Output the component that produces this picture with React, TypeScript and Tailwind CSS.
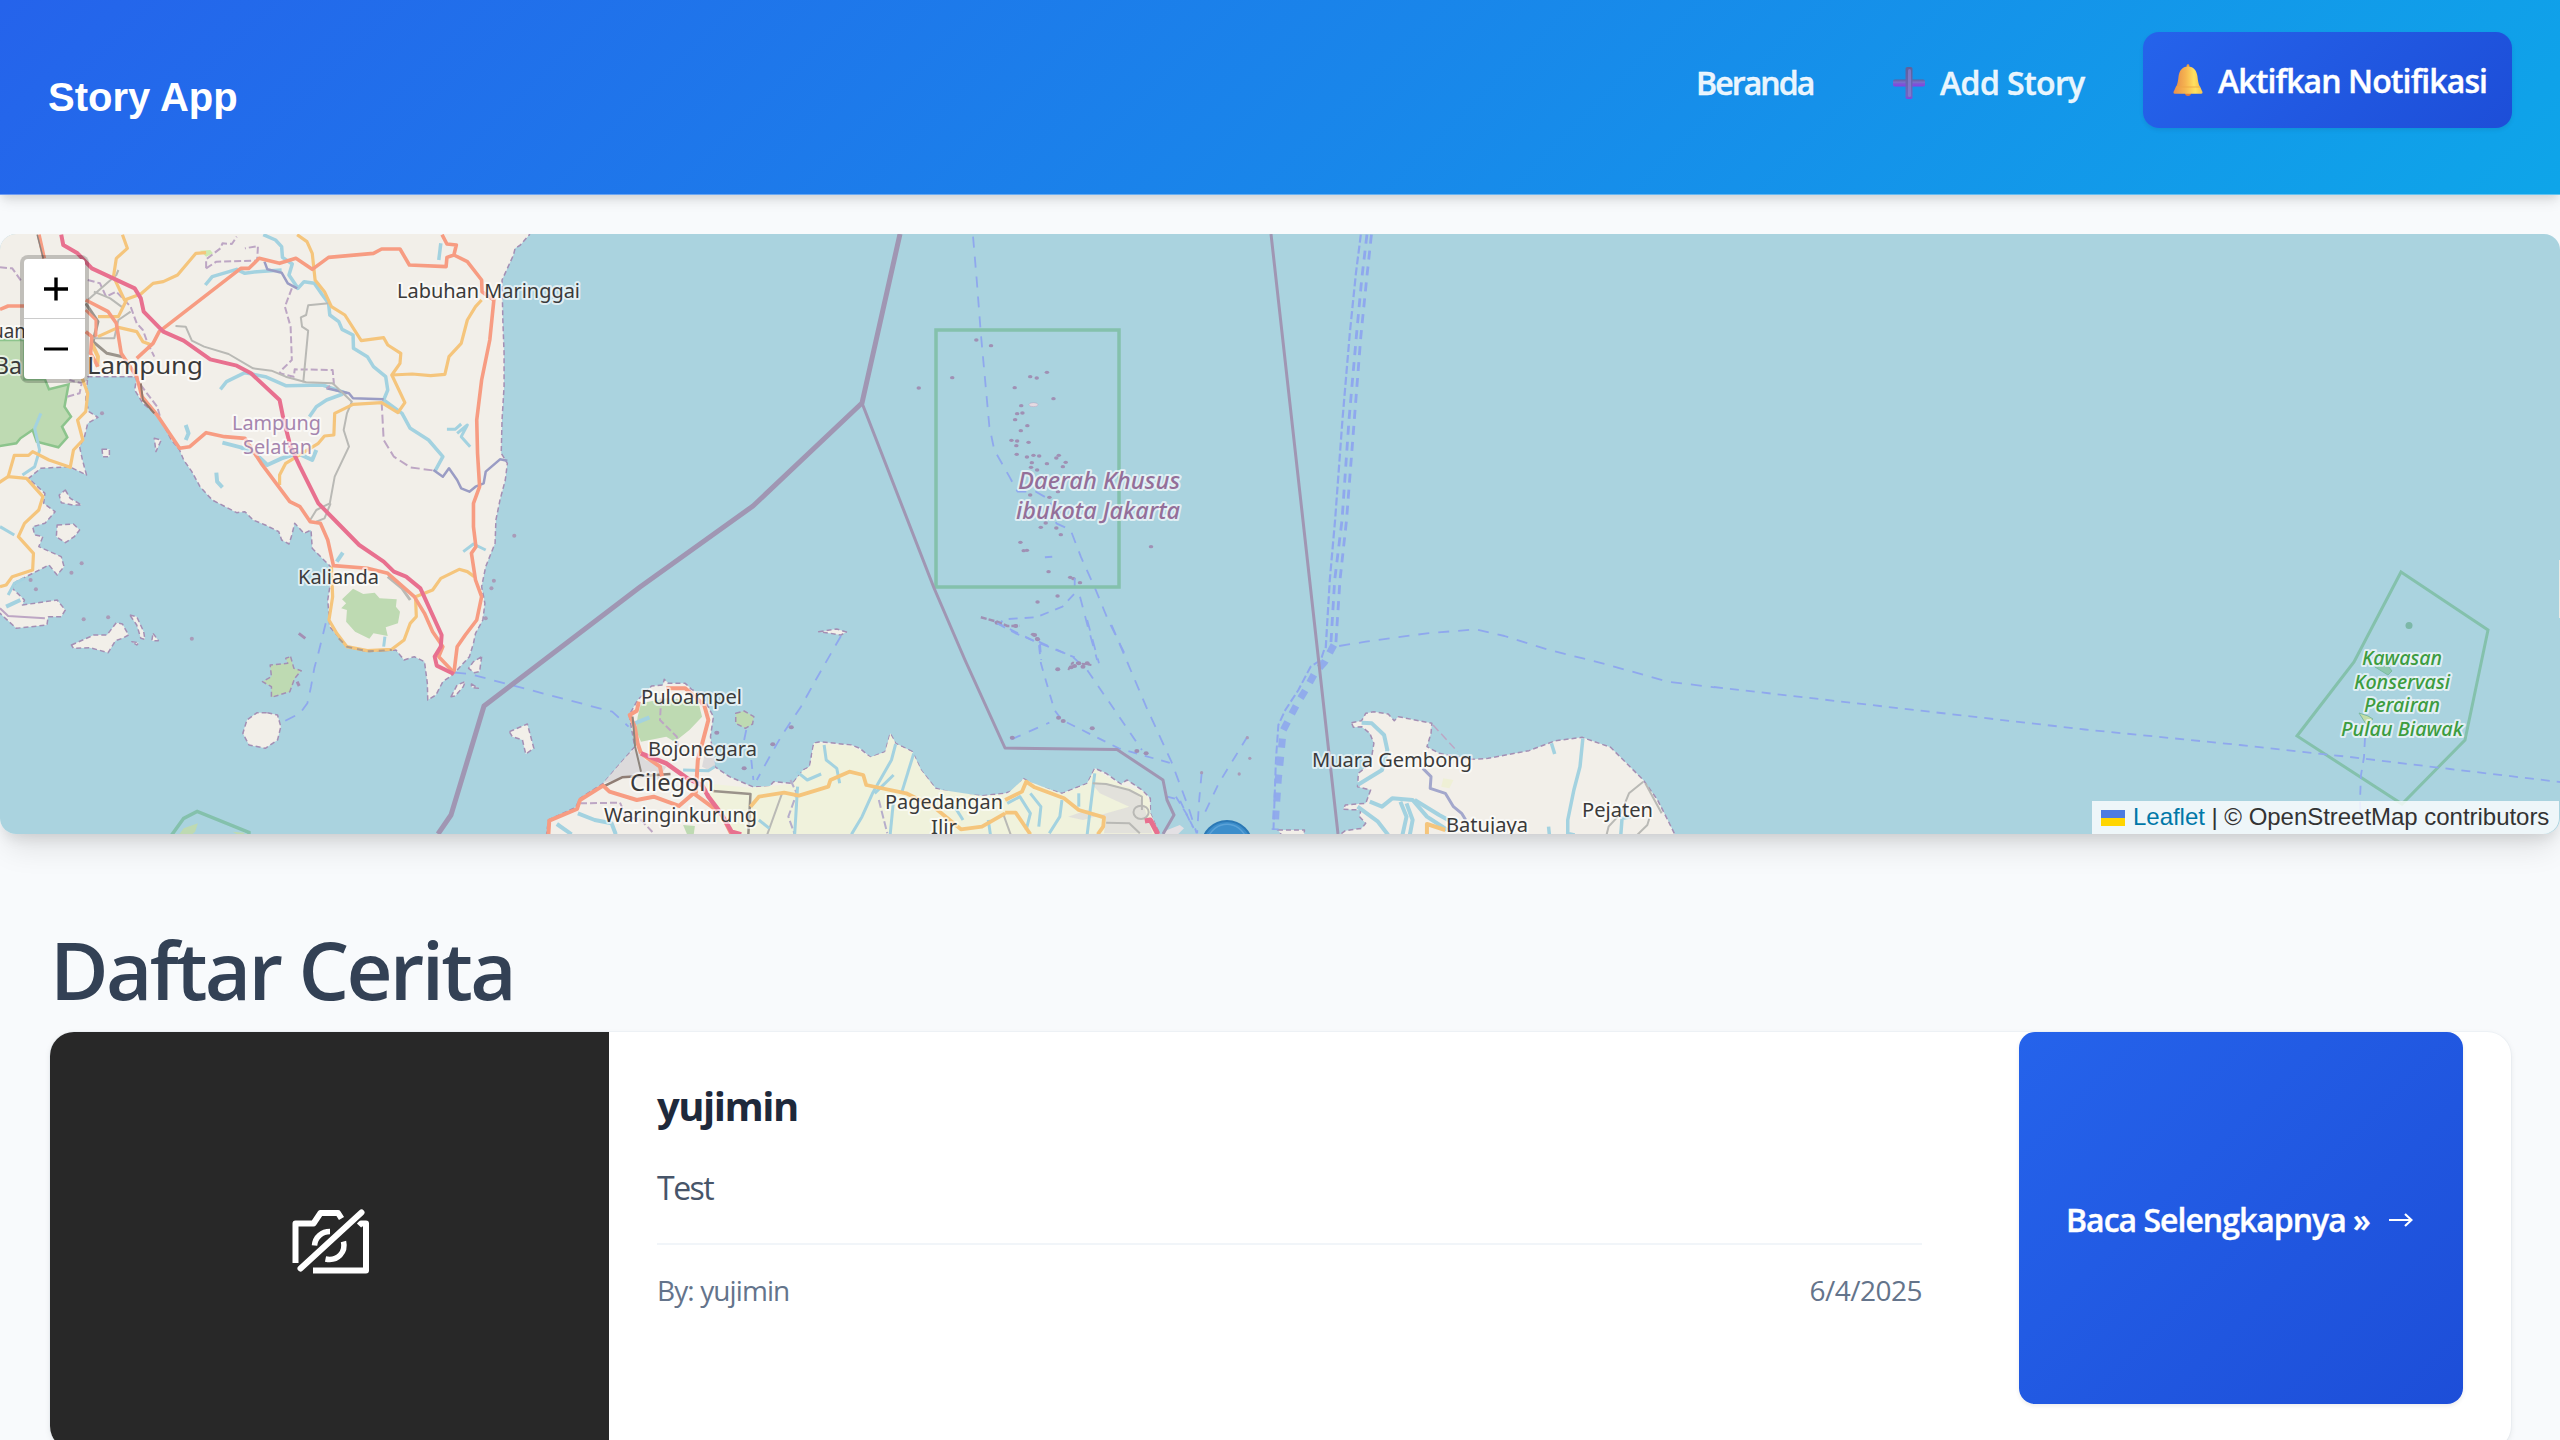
import React from 'react';

type LineProps = { p: string; c: string; w?: number; d?: string; o?: number };

// Polyline whose stroke keeps its width inside scaled groups.
const Line = ({ p, c, w = 2, d, o = 1 }: LineProps) => (
  <polyline points={p} fill="none" stroke={c} strokeWidth={w} strokeDasharray={d} opacity={o} strokeLinejoin="round" vectorEffect="non-scaling-stroke" />
);

const Land = ({ p, f = '#f2efe9', s = '#a48fb4' }: { p: string; f?: string; s?: string }) => (
  <polygon points={p} fill={f} stroke={s} strokeWidth={1.5} strokeDasharray="5 3" vectorEffect="non-scaling-stroke" strokeLinejoin="round" />
);

type LabelProps = { x: number; x2: number; y: number; s?: number; c?: string; i?: boolean; w?: number; t: string };

const Label = ({ x, x2, y, s = 20, c = '#3a3a3a', i, w = 400, t }: LabelProps) => (
  <text
    x={x}
    y={y}
    fontSize={s}
    fill={c}
    fontWeight={w}
    fontStyle={i ? 'italic' : 'normal'}
    textLength={x2 - x}
    lengthAdjust="spacingAndGlyphs"
    stroke="#ffffff"
    strokeOpacity={0.65}
    strokeWidth={4}
    strokeLinejoin="round"
    paintOrder="stroke"
  >
    {t}
  </text>
);

const MOTOR = '#e8708f';
const TRUNK = '#f79c82';
const ROAD = '#f5c57c';
const RIVER = '#a3d2e0';
const FERRY = '#8fa8ee';
const ADMIN = '#a096b3';
const BOUND = '#bda6c4';
const RAIL = '#b9b9b5';
const PARK = '#bedab2';
const RESERVE = '#84c1ac';

const islets: [number, number][] = [
  [334, 360], [370, 377], [275, 473], [193, 504], [507, 457], [482, 474], [466, 470], [428, 503], [523, 536], [444, 557],
  [434, 581], [447, 579], [429, 599], [459, 617], [443, 632], [420, 661], [434, 663], [462, 667], [432, 677], [433, 703],
  [458, 711], [474, 706], [488, 708], [470, 728], [507, 731], [530, 714], [536, 706], [553, 727], [546, 740], [468, 742],
  [483, 750], [466, 825], [513, 832], [534, 815], [504, 909], [492, 922], [530, 924], [541, 944], [442, 967], [450, 992],
  [458, 991], [511, 1055], [564, 1072], [572, 1076], [588, 1088], [533, 1128], [484, 1146], [762, 980], [473, 1243], [483, 1256],
];

const West = () => (
  <g transform="translate(0 220) scale(0.40816 0.33333)">
    <Land p="-10,30 1300,30 1297,44 1275,75 1262,85 1258,105 1245,140 1230,180 1232,300 1235,400 1235,500 1230,600 1228,700 1243,730 1238,780 1225,840 1215,900 1213,970 1203,1000 1190,1040 1180,1100 1188,1150 1183,1200 1165,1240 1160,1270 1150,1310 1120,1350 1105,1368 1085,1385 1068,1425 1048,1440 1047,1390 1040,1325 1015,1310 990,1320 970,1290 900,1295 850,1280 808,1220 803,1140 812,1070 810,1040 765,985 762,930 745,940 722,910 715,945 708,972 690,960 683,935 650,915 620,900 600,875 580,878 520,840 490,800 470,755 450,720 440,690 420,660 390,590 350,550 330,510 335,470 215,470 210,540 218,575 240,592 215,610 207,650 195,680 202,720 212,765 170,740 100,745 70,775 110,820 107,850 135,875 110,910 80,920 85,945 105,950 95,980 150,1010 157,1040 140,1065 120,1035 80,1060 40,1085 30,1105 60,1140 55,1155 140,1140 160,1170 150,1190 118,1190 115,1215 40,1225 0,1180 -10,1170" />
    <polygon points="-10,360 60,360 60,478 110,478 120,508 168,493 158,560 174,590 152,620 165,652 143,682 90,665 80,630 50,655 40,670 -10,680" fill={PARK} stroke="#8cc48c" strokeWidth={2.5} vectorEffect="non-scaling-stroke" />
    <polygon points="865,1106 890,1122 918,1118 930,1135 972,1138 970,1160 980,1175 975,1210 945,1222 950,1248 915,1240 905,1256 870,1235 848,1205 850,1170 836,1165 848,1150 838,1138" fill={PARK} />
    <polygon points="490,92 515,90 522,100 505,110" fill="#cdebb0" />

    <Line p="645,44 675,60 690,80 692,112 716,132 708,165 730,205 745,185 770,190 790,225 805,250 808,285 830,305 838,328 865,345 866,385 900,410 915,440 945,470 950,510 940,540 985,580 1005,625 1050,660 1085,710 1065,755" c={RIVER} w={3.5} />
    <Line p="503,195 520,170 580,148 600,160 630,155 690,150" c={RIVER} w={3.5} />
    <Line p="540,508 555,485 600,458 650,470 700,497 790,495 850,520" c={RIVER} w={3.5} />
    <Line p="758,590 775,560 800,540 840,522" c={RIVER} w={3.5} />
    <Line p="455,615 462,640 455,660" c={RIVER} w={4} />
    <Line p="530,758 532,785 545,802" c={RIVER} w={4} />
    <Line p="545,668 590,682 625,700 655,735 690,715 730,700 765,720 775,690" c={RIVER} w={4} />
    <Line p="1095,628 1115,628 1130,612" c={RIVER} w={3} />
    <Line p="1120,640 1145,615 1130,650 1152,680" c={RIVER} w={3} />
    <Line p="1075,120 1080,70" c={RIVER} w={3.5} />
    <Line p="100,580 85,625 97,690 85,740 55,765" c={RIVER} w={3} />
    <Line p="0,920 35,945" c={RIVER} w={3} />
    <Line p="20,1125 35,1090 60,1075" c={RIVER} w={3} />
    <Line p="825,1025 840,998" c={RIVER} w={4} />
    <Line p="1135,995 1160,972 1190,990" c={RIVER} w={3} />
    <Line p="15,1160 50,1140" c={RIVER} w={4} />
    <Line p="940,1280 943,1250" c={RIVER} w={3} />

    <Line p="648,125 655,148 690,158 705,190 728,205" c="#9a9cc4" w={2.5} />
    <Line p="800,505 855,520 865,535 940,538" c="#9a9cc4" w={2.5} />
    <Line p="1062,750 1085,770 1100,745 1120,780 1130,805 1150,815 1165,800 1185,790 1190,755 1225,718 1243,722" c="#9a9cc4" w={2.5} />
    <Line p="715,205 698,260 712,320 715,420 690,450 685,460 720,470 722,448 815,450 818,490 800,505" c={BOUND} d="7 3" />
    <Line p="935,545 940,660 965,710 1005,742 1065,752" c={BOUND} d="9 4" />
    <Line p="505,145 505,118 540,85 545,70 568,72 580,50" c={BOUND} d="7 3" />
    <Line p="505,145 530,125 630,122 632,78 600,85" c={BOUND} d="7 3" />
    <Line p="215,180 245,190 260,230 285,215 320,260 335,310 350,330 362,370 378,410" c={BOUND} d="7 3" />
    <Line p="0,142 30,145 55,188" c={BOUND} d="7 3" />
    <Line p="165,530 195,520 200,490 170,480" c={BOUND} d="7 3" />
    <Line p="330,470 360,520 385,560 392,590" c={BOUND} d="7 3" />
    <Line p="0,1165 20,1188 110,1195" c={BOUND} />

    <Line p="430,318 455,320 470,362 500,380 560,402 620,445 665,452 700,470 750,487 815,490 862,545 850,580 842,630 855,680 820,770 808,850 775,870 760,900" c={RAIL} />
    <Line p="805,250 755,256 750,285 737,292 740,320 755,332 743,487" c={RAIL} />
    <Line p="810,850 795,895 775,905" c={RAIL} />
    <Line p="210,250 240,305 228,365 262,400 300,410" c="#9b948c" w={3} />
    <Line p="215,240 285,165 290,150" c={RAIL} />
    <Line p="230,215 270,235 300,262" c={RAIL} />
    <Line p="225,355 280,355 290,300 320,275" c={RAIL} />
    <Line p="950,1070 985,1105 1005,1140" c={RAIL} w={3} />

    <Line p="300,44 312,85 285,115 278,170 305,240 345,222 375,190 400,185 435,165 480,100 505,98" c={ROAD} w={3.2} />
    <Line p="728,44 752,65 765,100 772,180 795,215 812,260 845,285 885,362 940,353 950,375 982,400 980,430 960,465 1010,462 1055,467 1090,463 1100,410 1130,370 1145,300 1165,260 1180,240" c={ROAD} w={3.2} />
    <Line p="960,465 992,548 975,578 935,548 865,553 820,580 818,645 795,648 780,670 700,730 685,765 685,795" c={ROAD} w={3.2} />
    <Line p="310,240 290,290 240,290" c={ROAD} w={3.2} />
    <Line p="240,350 290,322 335,335 350,365 372,375" c={ROAD} w={3.2} />
    <Line p="225,370 240,410 238,440" c={ROAD} w={4} />
    <Line p="200,470 215,520 210,575 190,600 203,660 180,690 172,742 120,720 80,695 70,706 35,706 20,770 65,775 105,830 95,870 60,910 45,950 82,1000 80,1050 30,1070 15,1095 0,1100" c={ROAD} w={3.2} />
    <Line p="20,770 -5,790" c={ROAD} w={3.2} />
    <Line p="812,1040 815,1130 806,1200 825,1240 850,1280 900,1292 960,1288 990,1260 1005,1210 1020,1190 1018,1130 1060,1110 1080,1075 1125,1048 1145,1055 1162,1070" c={ROAD} w={3.2} />
    <Line p="830,1255 850,1280 900,1294 960,1290" c="#b39e8a" w={2} d="6 5" />

    <Line p="335,415 375,370 390,335 590,145 610,145 635,115 685,130 725,115 765,148 805,112 915,100 935,87 980,87 1003,135 1093,140 1095,112 1112,105 1118,75 1095,72 1083,44" c={TRUNK} w={3.6} />
    <Line p="1112,105 1145,125 1180,180 1181,215 1210,240 1200,360 1180,480 1168,600 1170,700 1175,800 1160,850 1160,920 1166,980 1155,1000 1165,1080 1180,1130 1168,1200 1140,1245 1120,1280 1112,1360" c={TRUNK} w={3.6} />
    <Line p="210,240 265,275 285,310 297,400 335,470 348,530 385,585 415,640 440,685 465,680 505,638 550,650 600,655 640,730 710,845 735,860 760,905 785,910 803,960 817,1037 900,1045 950,1060 1015,1130 1040,1180 1060,1235 1085,1280 1075,1310 1110,1355" c={TRUNK} w={3.6} />
    <Line p="95,44 108,115" c={TRUNK} w={4} />
    <Line p="91,44 106,115" c="#8b8480" w={1.5} />
    <Line p="0,268 20,258 60,258" c={TRUNK} w={3.6} />
    <Line p="210,335 225,350 222,400 240,440" c={TRUNK} w={3.6} />
    <Line p="210,270 235,300 235,350" c={TRUNK} w={3} />
    <Line p="345,490 350,540 378,580" c="#95776a" w={2} />
    <Line p="150,44 155,75 190,100 225,145 330,205 345,235 352,275 400,335 450,362 515,418 580,437 615,460 685,540 695,600 712,680 735,740 780,850 820,900 880,975 940,1025 965,1055 995,1070 1030,1105 1082,1245 1080,1280 1065,1310 1070,1337 1112,1362" c={MOTOR} w={4} />

    <Land p="160,810 172,835 200,855 178,855 150,848 145,825" />
    <Land p="250,688 268,688 268,710 252,710" />
    <Land p="140,915 180,912 195,930 182,950 160,968 138,950" />
    <Land p="175,1275 230,1245 262,1245 285,1208 300,1212 315,1245 300,1255 283,1262 265,1298 220,1283 180,1285" />
    <Land p="318,1185 335,1190 352,1235 355,1258 345,1255 335,1215" />
    <Land p="375,1240 388,1262 372,1262" />
    <Land p="323,1265 340,1268 335,1275" />
    <Land p="378,655 395,660 382,695" />
    <Land p="655,1478 680,1485 688,1520 680,1560 650,1585 610,1575 595,1540 605,1500 630,1478" />
    <Land p="712,1310 720,1345 738,1352 722,1375 710,1415 665,1432 665,1400 643,1385 665,1370 662,1335 705,1330 700,1315" f={PARK} />
    <Land p="1180,1310 1175,1355 1162,1358 1148,1345 1160,1325" />
    <Land p="1105,1430 1120,1395 1140,1385 1135,1400 1115,1428" />
    <Land p="1155,1392 1172,1405 1155,1402" />
    <Land p="1248,1535 1292,1512 1308,1585 1288,1602 1280,1560 1255,1550" />
    <Line p="732,1240 748,1255" c="#a48fb4" w={3} />
    <Line p="728,1385 733,1398" c="#a48fb4" w={3} />
    {[[200, 1030], [205, 1198], [265, 1192], [470, 1256], [1260, 947], [1210, 1082], [1204, 1105], [75, 1080], [88, 1108], [175, 1058], [250, 580], [1190, 1195]].map(([x, y]) => (
      <ellipse key={`${x}-${y}`} cx={x} cy={y} rx={5} ry={6} fill="#a99bb8" />
    ))}
    <Line p="798,1210 782,1290 770,1345 762,1400 753,1450 735,1480 690,1508" c={FERRY} d="11 9" w={1.8} />
    <Line p="1115,1358 1150,1362 1500,1475 1540,1520" c={FERRY} d="11 9" w={1.8} />
    <polyline points="420,1846 450,1795 483,1774 610,1837 610,1850" fill="none" stroke={RESERVE} strokeWidth={3.5} vectorEffect="non-scaling-stroke" />
    <polygon points="435,1850 450,1825 485,1810 478,1835 465,1850" fill={PARK} />
    <polygon points="570,1835 600,1838 590,1850" fill={PARK} />
  </g>
);

const Banten = () => (
  <g transform="translate(540 620) scale(0.42092 0.33333)">
    <Land p="15,650 20,600 85,562 95,535 150,490 205,410 225,380 218,330 212,285 232,240 265,198 292,195 295,178 305,190 345,190 360,208 385,225 412,290 405,350 415,440 450,470 505,500 545,500 555,485 600,490 625,450 640,440 650,370 665,365 740,375 760,385 785,412 820,395 832,340 845,370 885,395 905,450 940,505 990,522 1050,527 1105,520 1135,505 1148,475 1175,495 1240,520 1300,490 1318,445 1345,460 1380,492 1395,480 1430,510 1450,535 1450,580 1475,650" />
    <polygon points="500,503 600,492 625,452 642,440 652,370 740,377 785,412 820,397 832,342 845,372 885,397 905,450 940,507 1050,528 1110,522 1148,478 1240,522 1300,492 1318,448 1380,494 1430,512 1448,540 1450,580 1475,650 490,650 415,600 390,490" fill="#f0f2dc" />
    <polygon points="225,385 250,420 300,440 280,480 205,470 150,490 205,410" fill="#dcdadb" />
    <polygon points="395,380 415,400 415,440 400,450 385,440" fill="#dcdadb" />
    <polygon points="1310,490 1345,490 1420,520 1435,560 1455,640 1340,640 1345,590 1300,570 1255,590 1290,600 1400,560 1330,520" fill="#dedcdb" opacity={0.8} />
    <polygon points="240,250 300,235 375,240 385,290 355,330 320,365 300,350 240,365 228,330 232,290" fill={PARK} />
    <polygon points="340,615 368,618 365,645 350,645" fill={PARK} />
    <Land p="465,280 485,273 508,290 505,312 488,325 465,310" f={PARK} />
    <Land p="662,35 705,27 728,36 715,45 680,38" />
    <Line p="288,235 285,300 325,350 328,380" c={BOUND} d="7 3" />
    <Line p="95,550 190,548 205,590 240,600 270,640" c={BOUND} d="7 3" />
    <Line p="595,480 610,520 590,590 605,643" c="#b6aecb" d="8 3" />
    <Line p="575,520 540,643" c={RAIL} />
    <Line p="805,540 825,640" c="#b6aecb" d="8 3" />
    <Line p="1100,580 1118,643" c={RAIL} />
    <Line p="675,375 680,420 705,445 712,490" c={RIVER} w={3} />
    <Line p="845,372 835,420 790,520 765,590 740,643" c={RIVER} w={3} />
    <Line p="888,400 860,515" c={RIVER} w={3} />
    <Line p="840,465 795,520" c={RIVER} w={3} />
    <Line p="610,455 635,480 668,462" c={RIVER} w={3} />
    <Line p="612,500 605,643" c={RIVER} w={3} />
    <Line p="840,540 832,643" c={RIVER} w={3} />
    <Line p="1110,550 1140,530 1165,580 1155,630" c={RIVER} w={3} />
    <Line p="1165,520 1190,560 1185,620" c={RIVER} w={3} />
    <Line p="1240,540 1235,590 1210,640" c={RIVER} w={3} />
    <Line p="1318,460 1310,540 1300,643" c={RIVER} w={3} />
    <Line p="1280,520 1280,560" c={RIVER} w={3} />
    <Line p="1065,600 1070,643" c={RIVER} w={3} />
    <Line p="985,560 1005,600" c={RIVER} w={3} />
    <Line p="40,612 75,643" c={RIVER} w={4} />
    <Line p="90,580 130,600 170,610 180,643" c={RIVER} w={4} />
    <Line p="340,450 400,452 415,440" c={RIVER} w={3} />
    <Line p="520,600 545,625" c={RIVER} w={3} />
    <Line p="225,310 260,292" c={RIVER} w={4} />
    <Line p="1313,490 1345,492 1400,510 1430,530 1430,570" c={RAIL} />
    <Line p="1345,608 1400,610 1425,640" c={RAIL} />
    <ellipse cx={1428} cy={577} rx={18} ry={20} fill="none" stroke={RAIL} strokeWidth={2} vectorEffect="non-scaling-stroke" />

    <Line p="150,500 195,472 310,462" c="#8f7d74" w={2.5} />
    <Line p="410,513 500,522 495,643" c="#9a938a" w={2.5} />
    <Line p="500,560 520,530 580,518 615,527 685,500 690,480 735,455 768,465 775,495 870,520 935,560 1000,628 1050,620 1105,580" c={ROAD} w={3.8} />
    <Line p="1105,540 1145,515 1155,485 1175,502 1245,535 1280,570 1340,592 1338,620 1325,643" c={ROAD} w={3.8} />
    <Line p="1105,578 1130,578 1165,643" c={ROAD} w={3.8} />
    <Line p="20,643 22,602 88,567 95,540 150,497 165,515 230,540 270,530 330,558 365,520 430,580 455,643" c={TRUNK} w={4} />
    <Line p="240,400 285,440 290,470" c={TRUNK} w={4} />
    <Line p="370,520 375,420 400,300 390,255 345,205 300,205" c={TRUNK} w={4} />
    <Line p="235,245 230,272 213,285 225,320 232,370 240,400" c={TRUNK} w={4} />
    <Line p="220,290 226,380 240,455" c="#8d857d" w={2} />
    <Line p="240,400 300,430 350,475 385,495 400,530 430,580 455,635 478,643" c={MOTOR} w={4.5} />
    <Line p="1437,603 1450,600 1468,643" c={MOTOR} w={5} />
    <polygon points="1480,635 1520,615 1530,625 1510,650 1480,650" fill="#e3e0e4" />

    <Line p="715,48 655,180 620,260 575,345 550,400 515,480" c={FERRY} d="11 9" w={1.8} />
    <Line p="490,330 485,360" c={FERRY} w={1.8} />
    <Line p="502,420 507,480" c={FERRY} d="9 7" w={1.8} />
    <Line p="1300,0 1328,130" c={FERRY} d="11 9" w={1.8} />
    <Line p="1358,15 1440,260 1500,425 1540,560 1560,640" c={FERRY} d="11 9" w={1.8} />
    <Line p="1080,5 1185,70 1190,130 1222,270 1240,300 1375,385 1430,405 1500,430" c={FERRY} d="9 8" w={1.8} />
    <Line p="1185,65 1265,110 1300,150 1430,390" c={FERRY} d="10 9" w={1.8} />
    <Line p="1120,358 1210,308" c={FERRY} d="10 9" w={1.8} />
    <Line p="1490,530 1520,540 1550,620" c={FERRY} d="8 6" w={1.8} />
    {[[597, 322], [553, 373], [420, 338], [485, 445], [1122, 353], [1312, 325], [1230, 148], [1175, 45], [1182, 58], [1232, 293], [1243, 303], [1418, 393], [1440, 400], [1262, 142], [1280, 130], [1300, 130], [1270, 138], [1290, 140], [1130, 18], [1086, 8]].map(([x, y]) => (
      <ellipse key={`${x}-${y}`} cx={x} cy={y} rx={6} ry={6} fill="#9f8fb3" />
    ))}
    <Line p="1255,150 1265,128 1310,135" c="#9f8fb3" w={2} d="4 2" />
  </g>
);

const Bay = () => (
  <g transform="translate(840 220) scale(0.40816 0.33333)">
    {islets.map(([x, y]) => (
      <ellipse key={`${x}-${y}`} cx={x} cy={y} rx={5.5} ry={5} fill="#a090b4" />
    ))}
    <ellipse cx={474} cy={554} rx={11} ry={6} fill="#e5dbe2" stroke="#a090b4" strokeWidth={1} />
    <Line p="326,50 335,180 345,340 357,500 366,620 378,690 415,770 435,815 480,815 515,840 530,910 565,930 590,1010 625,1105 655,1195 705,1320" c={FERRY} d="11 9" w={1.8} />
    <Line p="575,1075 575,1120 545,1160 480,1192 400,1198 390,1215" c={FERRY} d="9 7" w={1.8} />
    <Line p="588,1130 605,1210 630,1320" c={FERRY} d="11 9" w={1.8} />
    <Line p="345,1192 385,1205 410,1218 440,1217" c="#a090b4" w={2.5} d="6 2" />
    <Line p="385,1210 430,1240 490,1270 575,1312" c={FERRY} d="9 7" w={1.8} />
    <Line p="490,1270 493,1320" c={FERRY} d="9 7" w={1.8} />
    <Line p="502,1012 520,1010" c={FERRY} />
    <Line p="1276,44 1264,160 1249,340 1231,600 1213,900 1200,1080 1190,1285" c={FERRY} d="8 3" w={2.2} />
    <Line p="1291,44 1278,180 1265,350 1247,600 1230,900 1212,1080 1202,1285" c={FERRY} d="9 7" w={2.8} />
    <Line p="1302,44 1290,180 1276,350 1260,600 1241,900 1225,1080 1214,1285" c={FERRY} d="9 7" w={2.8} />
  </g>
);

const Karawang = () => (
  <g transform="translate(1080 600) scale(0.40816 0.33333)">
    <Land p="665,368 690,362 700,340 720,335 755,342 770,362 780,350 862,370 860,400 850,440 880,460 960,478 1000,475 1100,452 1165,422 1230,412 1300,442 1380,540 1415,600 1440,660 1462,715 625,715 650,692 690,685 700,670 685,650 688,630 645,628 650,615 700,610 712,570 680,560 682,520 712,490 720,430 710,400 690,380 670,382" />
    <Land p="485,690 550,690 548,715 500,715" />
    <Line p="865,375 925,455" c={BOUND} d="8 4" w={1.5} />
    <polygon points="890,535 915,540 905,565 885,560" fill="#eff0d6" />
    <Line p="690,368 715,370 745,405 753,450 740,510 680,555" c={RIVER} w={4} />
    <Line p="710,605 740,620 765,595 815,600 850,650 900,690" c={RIVER} w={4} />
    <Line p="785,605 800,650 790,705" c={RIVER} w={4} />
    <Line p="800,610 815,660 808,705" c={RIVER} w={4} />
    <Line p="820,600 880,645 910,665" c={RIVER} w={4} />
    <Line p="680,620 730,665 755,705" c={RIVER} w={4} />
    <Line p="1232,415 1225,500 1210,570 1195,660 1195,700 1212,705" c={RIVER} w={3.5} />
    <Line p="1155,430 1163,462" c={RIVER} w={3.5} />
    <Line p="1148,680 1150,705" c={RIVER} w={3.5} />
    <Line p="1325,705 1328,655 1350,650" c={RIVER} w={3.5} />
    <Line p="840,505 860,530 858,565 895,580 915,620 935,640 945,660" c="#a3a7cc" w={3} />
    <Line p="1380,545 1345,580 1325,640 1295,680 1290,705" c={RAIL} />
    <Line p="1395,655 1390,675 1365,705" c={RAIL} />
    <Line p="1385,550 1425,640" c={RAIL} />
    <Line p="850,705 850,672 895,690" c={ROAD} w={4} />
    <Line p="635,138 700,125 850,100 970,88 1040,108 1150,150 1280,190 1440,245 1555,262" c={FERRY} d="11 9" w={1.8} />
    <Line p="598,150 590,180 565,200 535,270 503,330 486,375 480,480 474,690" c={FERRY} d="8 3" w={2} />
    <Line p="622,135 600,185 575,220 555,265 535,305 515,350 498,390 494,440 490,490 486,535 480,640 478,690" c={FERRY} d="9 9" w={7} o={0.9} />
    <Line p="410,410 380,470 340,550 305,640" c={FERRY} d="10 9" w={1.8} />
    <Line p="298,520 292,600 287,700" c={FERRY} d="10 9" w={1.8} />
    <Line p="235,590 260,640 285,700" c={FERRY} d="8 6" w={1.8} />
    {[[410, 413], [416, 475], [390, 522], [298, 518]].map(([x, y]) => (
      <ellipse key={`${x}-${y}`} cx={x} cy={y} rx={4} ry={5} fill="#a99bb8" />
    ))}
  </g>
);

const MapCanvas = () => (
  <svg className="block h-[600px] w-full" viewBox="0 234 2560 600" preserveAspectRatio="none" fontFamily='"Noto Sans", sans-serif'>
    <rect x="0" y="234" width="2560" height="600" fill="#aad3df" />
    <West />
    <Banten />
    <Bay />
    <Karawang />
    <rect x="936" y="330" width="183" height="257" fill="none" stroke={RESERVE} strokeWidth="3.5" />
    <Line p="900,234 862,403 753,506 640,587 484,706 451,815 438,834" c={ADMIN} w={5} />
    <Line p="862,403 934,588 965,660 1005,748 1117,749.5 1163,780 1167,800 1174,815 1163,834" c={ADMIN} w={3} />
    <Line p="1271,234 1318,655 1338,834" c={ADMIN} w={3} />
    <polygon points="2401,572 2488,630 2465,740 2402,804 2297,736 2354,662" fill="none" stroke={RESERVE} strokeWidth="3" />
    <circle cx="2409" cy="625.5" r="3.5" fill="#7cb8a8" />
    <polygon points="2375,667 2388,666 2392,671 2388,675" fill="#8ec9ae" stroke="#7cbba3" />
    <polygon points="2359,713 2368,716 2373,719 2366,724" fill="#c3dda6" stroke="#7cbba3" />
    <Line p="1714,687 2085,729.5 2240,745 2350,757 2450,769 2560,782" c={FERRY} d="9 7" w={1.8} />
    <Line p="2365,738 2364,757 2361,775 2360,800 2361,834" c={FERRY} d="9 7" w={1.8} />
    <Line p="2559.5,560 2559.5,618" c="#eeeae4" w={1} />

    <circle cx="1227" cy="846" r="25" fill="#3d8ecb" stroke="#2b78b5" strokeWidth="2" />
    <path d="M1208 838a20 20 0 0 1 38 0" fill="none" stroke="#5ba2d8" strokeWidth="1.5" />

    <Label t="Labuhan Maringgai" x={397} x2={580} y={298} />
    <Label t="uan" x={-8} x2={26} y={338} />
    <Label t="Ba" x={-6} x2={22} y={374} s={24} />
    <Label t="Lampung" x={87} x2={203} y={374} s={24} />
    <Label t="Lampung" x={232} x2={321} y={430} c="#a585ae" />
    <Label t="Selatan" x={243} x2={312} y={454} c="#a585ae" />
    <Label t="Kalianda" x={298} x2={379} y={584} />
    <Label t="Puloampel" x={641} x2={742} y={704} />
    <Label t="Bojonegara" x={648} x2={757} y={756} />
    <Label t="Cilegon" x={630} x2={714} y={791} s={24} />
    <Label t="Waringinkurung" x={604} x2={757} y={821.5} />
    <Label t="Pagedangan" x={885} x2={1003} y={809} />
    <Label t="Ilir" x={931} x2={957} y={834} />
    <Label t="Daerah Khusus" x={1018} x2={1180} y={488.5} s={24} c="#946f99" i w={500} />
    <Label t="ibukota Jakarta" x={1016} x2={1180} y={518.5} s={24} c="#946f99" i w={500} />
    <Label t="Muara Gembong" x={1312} x2={1472} y={767} />
    <Label t="Batujaya" x={1446} x2={1528} y={832} />
    <Label t="Pejaten" x={1582} x2={1653} y={817} />
    <Label t="Kawasan" x={2362} x2={2442} y={665} c="#3c9c3f" i w={500} />
    <Label t="Konservasi" x={2354} x2={2450} y={688.5} c="#3c9c3f" i w={500} />
    <Label t="Perairan" x={2364} x2={2440} y={712} c="#3c9c3f" i w={500} />
    <Label t="Pulau Biawak" x={2341} x2={2463} y={736} c="#3c9c3f" i w={500} />
  </svg>
);

const PlusEmoji = () => (
  <svg className="h-8 w-8 shrink-0" viewBox="0 0 32 32">
    <defs>
      <linearGradient id="plusH" x1="0" y1="0" x2="0" y2="1">
        <stop offset="0" stopColor="#5f5f9f" />
        <stop offset="0.4" stopColor="#7a6fcb" />
        <stop offset="0.6" stopColor="#7a58d6" />
        <stop offset="1" stopColor="#8a3fe0" />
      </linearGradient>
      <linearGradient id="plusV" x1="0" y1="0" x2="0" y2="1">
        <stop offset="0" stopColor="#5f619c" />
        <stop offset="0.9" stopColor="#6f66c2" />
        <stop offset="1" stopColor="#8a3fe0" />
      </linearGradient>
    </defs>
    <rect x="0" y="12.5" width="32" height="7" rx="1.8" fill="url(#plusH)" />
    <rect x="12.5" y="0" width="7" height="32" rx="1.8" fill="url(#plusV)" />
    <rect x="15" y="2" width="3" height="28" rx="1.5" fill="#837ed0" opacity="0.8" />
  </svg>
);

const BellEmoji = () => (
  <svg className="h-8 w-[30px] shrink-0" viewBox="0 0 30 32">
    <defs>
      <linearGradient id="bell" x1="0" y1="0" x2="1" y2="0">
        <stop offset="0" stopColor="#e8914c" />
        <stop offset="0.4" stopColor="#f6b550" />
        <stop offset="0.75" stopColor="#ffe160" />
        <stop offset="1" stopColor="#f8c44e" />
      </linearGradient>
    </defs>
    <circle cx="15" cy="29" r="3" fill="#e07a3f" />
    <rect x="13.6" y="0.3" width="2.8" height="6" rx="1.4" fill="#f0a040" />
    <path d="M15 2.500C9 2.500 6.300 7 5.600 12 5 17 4.600 20 3 23h24c-1.600-3-2-6-2.600-11C23.700 7 21 2.500 15 2.500z" fill="url(#bell)" />
    <path d="M3 22.500h24L29.500 28q.4 1.800-1.200 1.800H1.700Q.1 29.800.5 28z" fill="url(#bell)" />
    <path d="M3 23h24" stroke="#eda545" strokeWidth="0.8" />
  </svg>
);

const CameraOff = () => (
  <svg className="ml-[3px] h-[68px] w-20" viewBox="0 0 80 68" fill="none" stroke="#ffffff" strokeWidth="6" strokeLinejoin="round" strokeLinecap="butt">
    <path d="M4.500 56V16.500H22.500L29.500 6H47L50.500 11.500" />
    <path d="M68 18.500L70 16.500H75V63.500H22" />
    <path d="M23.500 38.500C24 30 31 24.500 39 24.500" strokeWidth="5.500" />
    <path d="M52.500 34.500C55 45 47 54.500 34.500 52" strokeWidth="5.500" />
    <path d="M9.500 61.500L70.500 5.500" strokeLinecap="round" />
  </svg>
);

export default function App() {
  return (
    <div className="h-[1440px] w-[2560px] overflow-hidden bg-[#f8fafc] font-['Open_Sans','Noto_Sans',sans-serif]">
      <header className="flex h-[195px] items-start justify-between border-b border-white/35 bg-[linear-gradient(135deg,#2563eb,#0ea5e9)] bg-origin-border px-12 shadow-[0_8px_12px_-2px_rgba(0,0,0,0.1),0_4px_8px_-2px_rgba(0,0,0,0.08)]">
        <h1 className="mt-[68px] text-[40px] leading-[58px] font-bold text-white font-['Liberation_Sans',sans-serif]">Story App</h1>
        <nav className="mt-8 flex items-start text-[32px] leading-[44px] font-semibold whitespace-nowrap [-webkit-text-stroke:0.4px]">
          <a className="mt-[29px] w-[197px] tracking-[-1.9px] text-white/90">Beranda</a>
          <a className="mt-[29px] flex w-[250px] items-center gap-[15px] text-white/90">
            <PlusEmoji />
            <span className="tracking-[-0.6px]">Add Story</span>
          </a>
          <button className="flex h-24 w-[369px] items-center gap-[15px] rounded-2xl bg-[linear-gradient(135deg,#2563eb,#1d4ed8)] pl-[30px] text-white shadow-[0_2px_4px_rgba(0,0,0,0.08)]">
            <BellEmoji />
            <span className="mt-0.5 tracking-[-0.9px]">Aktifkan Notifikasi</span>
          </button>
        </nav>
      </header>

      <section className="relative mt-[39px] h-[600px] w-full rounded-2xl shadow-[0_20px_30px_-6px_rgba(0,0,0,0.1),0_8px_14px_-4px_rgba(0,0,0,0.1)]">
        <div className="h-full w-full overflow-hidden rounded-2xl">
          <MapCanvas />
        </div>
        <div className="absolute top-[21px] left-5 flex w-[69px] flex-col overflow-hidden rounded-lg border-4 border-black/20 bg-white bg-clip-padding">
          <button className="flex h-[60px] items-center justify-center border-b border-[#cccccc]" aria-label="Zoom in">
            <svg className="ml-0.5 h-6 w-6" viewBox="0 0 24 24" stroke="#000" strokeWidth="3.4"><path d="M12 0.500v23M0 12h24" /></svg>
          </button>
          <button className="flex h-[60px] items-center justify-center" aria-label="Zoom out">
            <svg className="ml-0.5 h-6 w-6" viewBox="0 0 24 24" stroke="#000" strokeWidth="3.2"><path d="M0 12h24" /></svg>
          </button>
        </div>
        <div className="absolute right-px bottom-0 flex h-[33px] w-[467px] items-center rounded-br-2xl bg-white/80 pl-[9px] text-2xl leading-[31px] tracking-[-0.03px] whitespace-nowrap text-[#333333] font-['Liberation_Sans',sans-serif]">
          <svg className="mr-2 h-4 w-6" viewBox="0 0 24 16"><path fill="#4C7BE1" d="M0 0h24v8H0z" /><path fill="#FFD500" d="M0 8h24v8H0z" /></svg>
          <span className="-mt-0.5 whitespace-pre"><a className="text-[#0078A8]">Leaflet</a> | © OpenStreetMap contributors</span>
        </div>
      </section>

      <main className="pr-[49px] pl-[50px] pt-[82px]">
        <h2 className="h-[116px] text-[80px] leading-[106px] font-semibold tracking-[-2.7px] text-[#334155]">Daftar Cerita</h2>
        <article className="flex h-[418px] w-[2461px] overflow-hidden rounded-3xl bg-white shadow-[0_2px_6px_rgba(0,0,0,0.08),0_0_0_1px_rgba(241,245,249,1)]">
          <div className="flex w-[559px] shrink-0 items-center justify-center bg-[#282828]">
            <CameraOff />
          </div>
          <div className="ml-12 w-[1265px] shrink-0 pt-11">
            <h3 className="text-[40px] leading-[60px] font-bold tracking-[-1.5px] text-[#1e293b]">yujimin</h3>
            <p className="mt-[27px] text-[32px] leading-[50px] tracking-[-1.5px] text-[#475569]">Test</p>
            <div className="mt-[30px] flex justify-between border-t-2 border-[#f1f5f9] pt-[25px] text-[28px] leading-[40px] text-[#64748b]">
              <span className="tracking-[-0.9px]">By: yujimin</span>
              <span className="tracking-[-0.5px]">6/4/2025</span>
            </div>
          </div>
          <a className="ml-[97px] flex h-[372px] w-[444px] shrink-0 items-center rounded-2xl bg-[linear-gradient(135deg,#2563eb,#1d4ed8)] pl-[47px] text-[32px] leading-[44px] font-semibold whitespace-nowrap text-white shadow-[0_2px_4px_rgba(0,0,0,0.08)] [-webkit-text-stroke:0.4px]">
            <span className="mt-[3px] w-[323px] tracking-[-1px]">Baca Selengkapnya »</span>
            <svg className="mt-1 h-4 w-6" viewBox="0 0 24 16" fill="none" stroke="#fff" strokeWidth="2.2"><path d="M0 8h22M16 2l6.500 6-6.500 6" /></svg>
          </a>
        </article>
      </main>
    </div>
  );
}
